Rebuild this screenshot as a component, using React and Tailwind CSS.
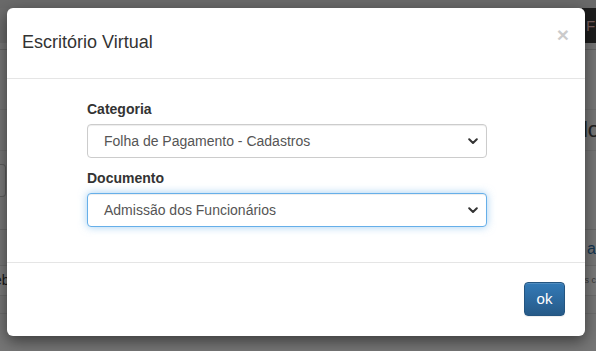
import React from 'react';

function Chevron() {
  return (
    <svg width="10" height="7" viewBox="0 0 10 7" className="shrink-0">
      <path d="M1.2 1.3 L5 5 L8.8 1.3" fill="none" stroke="#333" strokeWidth="2" strokeLinecap="round" strokeLinejoin="round" />
    </svg>
  );
}

function SelectBox({ value, focused }) {
  return (
    <div
      className={`flex items-center justify-between h-[34px] rounded-[4px] bg-white pl-[16px] pr-[8px] text-[14px] text-[#555] border ${
        focused
          ? 'border-[#66afe9] shadow-[inset_0_1px_1px_rgba(0,0,0,0.075),0_0_8px_rgba(102,175,233,0.6)]'
          : 'border-[#ccc] shadow-[inset_0_1px_1px_rgba(0,0,0,0.075)]'
      }`}
    >
      <span>{value}</span>
      <Chevron />
    </div>
  );
}

export default function App() {
  return (
    <div className="relative w-[596px] h-[351px] overflow-hidden bg-[#ececec] font-['Liberation_Sans',Arial,sans-serif]">
      {/* page behind the backdrop */}
      <div className="flex flex-col">
        <div className="h-[8px] bg-[#d4d4d4]" />
        <div className="flex h-[35px] bg-[#d8d8d8]">
          <div className="flex-1" />
          <div className="w-[14px] bg-[#3a3a3a] text-[#f0c0c0] text-[15px] leading-[35px] pl-[4px]">F</div>
        </div>
        <div className="h-[7px] border-b border-[#c8c8c8]" />
        <div className="flex h-[60px] border-b border-[#dcdcdc]" />
        <div className="flex h-[40px] justify-end">
          <span className="text-[22px] text-[#444] -mr-[4px] leading-[40px]">lo</span>
        </div>
        <div className="flex h-[60px] items-center border-t border-[#dcdcdc]">
          <div className="w-[6px] h-[33px] border border-l-0 border-[#bbb] rounded-r-[4px] bg-[#f7f7f7]" />
        </div>
        <div className="h-[20px] border-b border-[#d0d0d0]" />
        <div className="flex h-[36px] items-end pb-[4px] justify-end border-b border-[#d8d8d8]">
          <span className="text-[16px] text-[#2a6aa0]">a</span>
        </div>
        <div className="flex h-[30px] items-center justify-between bg-[#f5f5f5] border-b border-[#d8d8d8]">
          <span className="text-[14px] text-[#333] -ml-[6px]">eb</span>
          <span className="text-[9px] text-[#777]">s c</span>
        </div>
        <div className="h-[18px] border-b border-[#d8d8d8]" />
      </div>

      {/* backdrop */}
      <div className="absolute inset-0 bg-black/50" />

      {/* modal */}
      <div className="absolute left-[7px] top-[8px] w-[578px] rounded-[6px] bg-white shadow-[0_5px_15px_rgba(0,0,0,0.5)] text-[#333]">
        <div className="flex items-start justify-between h-[71px] pl-[15px] pr-[16px] pt-[20px] border-b border-[#e5e5e5]">
          <h4 className="text-[18px] leading-[26px] mt-[1px]">Escritório Virtual</h4>
          <button className="text-[21px] font-bold leading-none text-black opacity-20 -mt-[4px]">×</button>
        </div>
        <div className="pt-[20px] pb-[35px] pl-[80px]">
          <div className="w-[400px] flex flex-col">
            <label className="text-[14px] font-bold leading-[20px] mb-[5px]">Categoria</label>
            <SelectBox value="Folha de Pagamento - Cadastros" />
            <label className="text-[14px] font-bold leading-[20px] mb-[5px] mt-[10px]">Documento</label>
            <SelectBox value="Admissão dos Funcionários" focused />
          </div>
        </div>
        <div className="flex justify-end border-t border-[#e5e5e5] pt-[19px] pb-[20px] pr-[20px]">
          <button className="h-[34px] w-[41px] rounded-[4px] text-white text-[15px] border border-[#245580] bg-[linear-gradient(to_bottom,#337ab7_0,#265a88_100%)] shadow-[inset_0_1px_0_rgba(255,255,255,0.15),0_1px_1px_rgba(0,0,0,0.075)]">
            ok
          </button>
        </div>
      </div>
    </div>
  );
}
